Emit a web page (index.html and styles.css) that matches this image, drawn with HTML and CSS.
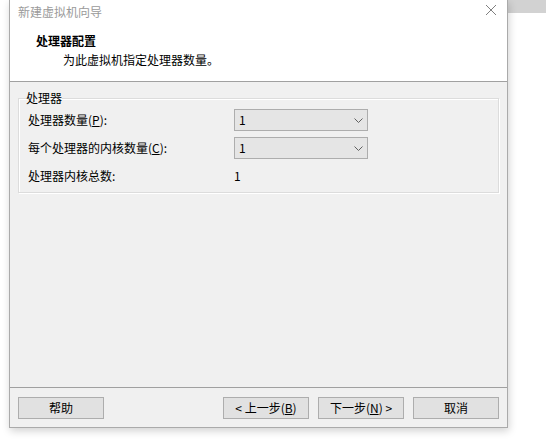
FILE: index.html
```html
<!DOCTYPE html>
<html lang="zh-CN">
<head>
<meta charset="utf-8">
<title>新建虚拟机向导</title>
<link rel="stylesheet" href="styles.css">
</head>
<body>
<div class="desk">
  <div class="gap-left"></div>
  <div class="window">
    <div class="top">
      <div class="titlebar">
        <span class="title">新建虚拟机向导</span>
        <span class="close">
          <svg width="12" height="12" viewBox="0 0 12 12"><path d="M1 1L11 11M11 1L1 11" stroke="#808080" stroke-width="1" fill="none"/></svg>
        </span>
      </div>
      <div class="header">
        <div class="h-title">处理器配置</div>
        <div class="h-sub">为此虚拟机指定处理器数量。</div>
      </div>
    </div>
    <div class="body">
      <fieldset class="group">
        <legend class="legend">处理器</legend>
        <div class="grid">
          <div class="label">处理器数量(<u>P</u>):</div>
          <div class="combo"><span>1</span><svg class="chev" width="9" height="5" viewBox="0 0 9 5"><path d="M0.5 0.5L4.5 4.5L8.5 0.5" stroke="#606060" fill="none"/></svg></div>
          <div class="label">每个处理器的内核数量(<u>C</u>):</div>
          <div class="combo"><span>1</span><svg class="chev" width="9" height="5" viewBox="0 0 9 5"><path d="M0.5 0.5L4.5 4.5L8.5 0.5" stroke="#606060" fill="none"/></svg></div>
          <div class="label">处理器内核总数:</div>
          <div class="value">1</div>
        </div>
      </fieldset>
    </div>
    <div class="footer">
      <button class="btn">帮助</button>
      <div class="spacer"></div>
      <button class="btn">&lt; 上一步(<u>B</u>)</button>
      <button class="btn">下一步(<u>N</u>) &gt;</button>
      <button class="btn">取消</button>
    </div>
  </div>
  <div class="right">
    <div class="bar"></div>
  </div>
</div>
</body>
</html>
```
FILE: styles.css
```css
html, body {
  margin: 0;
  padding: 0;
  background: #ffffff;
}
body {
  width: 546px;
  height: 445px;
  overflow: hidden;
  font-family: "Noto Sans CJK SC", "Microsoft YaHei", sans-serif;
  font-size: 12px;
  color: #000;
}
.desk {
  display: flex;
  align-items: flex-start;
  height: 445px;
}
.gap-left {
  width: 9px;
  flex: none;
}
.window {
  position: relative;
  z-index: 1;
  width: 497px;
  height: 427px;
  flex: none;
  display: flex;
  flex-direction: column;
  border: 1px solid #aaaaaa;
  border-top: none;
  box-shadow: 1px 3px 8px rgba(0, 0, 0, 0.18);
  background: #f0f0f0;
}
.top {
  height: 81px;
  background: #ffffff;
  border-bottom: 1px solid #a0a0a0;
  flex: none;
}
.titlebar {
  height: 24px;
  display: flex;
  align-items: center;
  justify-content: space-between;
  padding-left: 8px;
  padding-right: 10px;
}
.title {
  color: #9a9a9a;
  line-height: 24px;
}
.close {
  display: flex;
  align-items: center;
  margin-top: -4px;
}
.header {
  padding-top: 7px;
  padding-left: 26px;
}
.h-title {
  font-weight: bold;
  line-height: 19px;
}
.h-sub {
  line-height: 19px;
  padding-left: 27px;
}
.body {
  flex: 1;
  padding: 8px 8px 0 8px;
  background: #f0f0f0;
}
.group {
  margin: 0;
  padding: 3px 9px 5px 9px;
  border: 1px solid #dcdcdc;
  box-shadow: inset 1px 1px 0 #ffffff, 1px 1px 0 #ffffff;
  min-width: 0;
}
.legend {
  padding: 0;
  margin-left: -2px;
  line-height: 16px;
}
.grid {
  display: grid;
  grid-template-columns: 206px 134px;
  grid-auto-rows: 22px;
  row-gap: 6px;
  align-items: center;
}
.label {
  line-height: 22px;
  white-space: nowrap;
}
.combo {
  height: 20px;
  background: #e5e5e5;
  border: 1px solid #adadad;
  display: flex;
  align-items: center;
  justify-content: space-between;
  padding: 0 4px 0 4px;
}
.combo span {
  line-height: 20px;
}
.chev {
  margin-right: 0;
}
.value {
  line-height: 22px;
}
.footer {
  flex: none;
  height: 22px;
  padding: 9px 8px 8px 8px;
  border-top: 1px solid #a0a0a0;
  display: flex;
  gap: 9px;
  background: #f0f0f0;
}
.spacer {
  flex: 1;
}
.btn {
  width: 86px;
  height: 22px;
  margin: 0;
  padding: 0;
  background: #e1e1e1;
  border: 1px solid #adadad;
  font-family: inherit;
  font-size: 12px;
  color: #000;
  line-height: 20px;
}
.right {
  flex: 1;
}
.bar {
  height: 13px;
  background: #d2d2d2;
}
```
